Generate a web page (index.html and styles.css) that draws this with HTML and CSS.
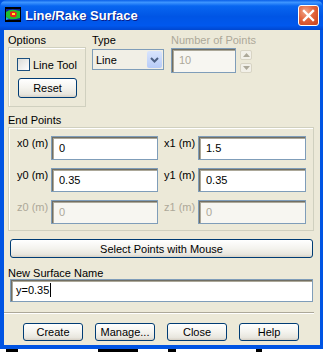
FILE: index.html
```html
<!DOCTYPE html>
<html lang="en">
<head>
  <title>Line/Rake Surface</title>
  <link rel="stylesheet" href="styles.css">
</head>
<body>
<div class="window">
  <div class="titlebar">
    <svg class="app-icon" width="16" height="15" viewBox="0 0 16 15">
      <rect x="0" y="0" width="16" height="15" fill="#000"/>
      <rect x="1" y="2" width="14" height="11" fill="#0d1f9c"/>
      <path d="M1 5 Q5 2 10 3 L15 4 L15 11 Q9 13 4 12 L1 10 Z" fill="#20c030"/>
      <path d="M5 5 Q9 3 12 6 L11 10 Q7 11 5 9 Z" fill="#e8241a"/>
      <path d="M7 6 L10 6 L10 8 L7 8 Z" fill="#fff21a"/>
      <path d="M1 10 L4 12 L1 13 Z" fill="#1ab0e8"/>
    </svg>
    <div class="title">Line/Rake Surface</div>
    <div class="close-btn">
      <svg width="13" height="13" viewBox="0 0 13 13">
        <path d="M2 2 L11 11 M11 2 L2 11" stroke="#fff" stroke-width="2.4" stroke-linecap="square"/>
      </svg>
    </div>
  </div>

  <div class="content">
    <div class="top-row">
      <div class="options-group">
        <div class="label">Options</div>
        <div class="group-box options-box">
          <div class="check-row">
            <span class="checkbox"></span>
            <span>Line Tool</span>
          </div>
          <div class="btn reset-btn">Reset</div>
        </div>
      </div>

      <div class="type-group">
        <div class="label">Type</div>
        <div class="select">
          <span class="select-value">Line</span>
          <span class="select-arrow">
            <svg width="9" height="6" viewBox="0 0 9 6">
              <path d="M1 1 L4.5 4.5 L8 1" stroke="#4d6185" stroke-width="2" fill="none"/>
            </svg>
          </span>
        </div>
      </div>

      <div class="points-group">
        <div class="label disabled">Number of Points</div>
        <div class="spin-row">
          <div class="field disabled-field points-field">10</div>
          <div class="spinner">
            <span class="spin-btn">
              <svg width="7" height="4" viewBox="0 0 7 4"><path d="M0 4 L3.5 0 L7 4 Z" fill="#aca899"/></svg>
            </span>
            <span class="spin-btn">
              <svg width="7" height="4" viewBox="0 0 7 4"><path d="M0 0 L3.5 4 L7 0 Z" fill="#aca899"/></svg>
            </span>
          </div>
        </div>
      </div>
    </div>

    <div class="label endpoints-label">End Points</div>
    <div class="group-box endpoints-box">
      <div class="point-row">
        <span class="coord-label">x0 (m)</span>
        <div class="field coord-field">0</div>
        <span class="coord-label right-label">x1 (m)</span>
        <div class="field coord-field wide">1.5</div>
      </div>
      <div class="point-row">
        <span class="coord-label">y0 (m)</span>
        <div class="field coord-field">0.35</div>
        <span class="coord-label right-label">y1 (m)</span>
        <div class="field coord-field wide">0.35</div>
      </div>
      <div class="point-row">
        <span class="coord-label disabled">z0 (m)</span>
        <div class="field coord-field disabled-field">0</div>
        <span class="coord-label right-label disabled">z1 (m)</span>
        <div class="field coord-field wide disabled-field">0</div>
      </div>
    </div>

    <div class="btn wide-btn">Select Points with Mouse</div>

    <div class="label name-label">New Surface Name</div>
    <div class="field name-field">y=0.35<span class="caret"></span></div>

    <div class="separator"></div>

    <div class="button-row">
      <div class="btn action-btn">Create</div>
      <div class="btn action-btn">Manage...</div>
      <div class="btn action-btn">Close</div>
      <div class="btn action-btn">Help</div>
    </div>
  </div>
</div>
<div class="behind">
  <span class="blob b1"></span>
  <span class="blob b2"></span>
  <span class="blob b3"></span>
  <span class="blob b4"></span>
</div>
</body>
</html>
```

FILE: styles.css
```css
body {
  margin: 0;
  width: 323px;
  height: 352px;
  overflow: hidden;
  background: #fff;
  font-family: 'Liberation Sans', Arial, sans-serif;
  font-size: 11px;
  color: #000;
}

.window {
  width: 323px;
  height: 349px;
  box-sizing: border-box;
  background: #0054e3;
  display: flex;
  flex-direction: column;
}

.titlebar {
  height: 30px;
  flex: none;
  display: flex;
  align-items: center;
  padding: 0 5px;
  background: linear-gradient(#0a5fe8 0%, #3d95ff 8%, #0866f0 20%, #0055e5 55%, #0058ee 85%, #0047d0 100%);
  border-radius: 7px 7px 0 0;
}

.app-icon {
  flex: none;
  margin-top: -1px;
}

.title {
  flex: 1;
  margin-left: 4px;
  color: #fff;
  font-weight: bold;
  font-size: 13px;
  text-shadow: 1px 1px 0 #0a1e8a;
}

.close-btn {
  width: 19px;
  height: 19px;
  border: 1px solid #fff;
  border-radius: 3px;
  background: radial-gradient(circle at 35% 30%, #f2a689 0%, #e2643c 45%, #c8401a 100%);
  display: flex;
  align-items: center;
  justify-content: center;
  margin-right: -1px;
}

.content {
  flex: 1;
  margin: 0 3px 4px 4px;
  background: #ece9d8;
  padding: 3px 0 0 4px;
}

.label {
  height: 14px;
  line-height: 14px;
}

.disabled {
  color: #aca899;
}

.top-row {
  display: flex;
}

.group-box {
  border: 1px solid #d0d0bf;
  box-shadow: inset 1px 1px 0 #fff;
  box-sizing: border-box;
}

.options-group {
  width: 78px;
}

.options-box {
  height: 60px;
  padding: 10px 0 0 8px;
}

.check-row {
  display: flex;
  align-items: center;
  gap: 3px;
  height: 13px;
}

.checkbox {
  width: 11px;
  height: 11px;
  border: 1px solid #1c5180;
  background: linear-gradient(135deg, #dcdcd7, #fff);
}

.btn {
  box-sizing: border-box;
  border: 1px solid #003c74;
  border-radius: 3px;
  background: linear-gradient(#fff 0%, #f4f3ee 50%, #e8e6de 85%, #d6d0c5 100%);
  display: flex;
  align-items: center;
  justify-content: center;
}

.reset-btn {
  width: 59px;
  height: 20px;
  margin: 7px 0 0 1px;
}

.type-group {
  width: 72px;
  margin-left: 6px;
}

.select {
  margin-top: 2px;
  height: 21px;
  box-sizing: border-box;
  border: 1px solid #7f9db9;
  background: #f1efe6;
  display: flex;
  align-items: center;
}

.select-value {
  flex: 1;
  padding-left: 3px;
}

.select-arrow {
  width: 15px;
  height: 17px;
  margin-right: 1px;
  border-radius: 2px;
  background: linear-gradient(#d9e5fd, #b7cbf8);
  display: flex;
  align-items: center;
  justify-content: center;
}

.points-group {
  margin-left: 7px;
}

.spin-row {
  display: flex;
  margin-top: 1px;
}

.field {
  box-sizing: border-box;
  border: 1px solid #7f9db9;
  box-shadow: inset 1px 1px 0 #716f64, inset 2px 2px 0 #aca899;
  background: #fff;
  padding: 5px 0 0 7px;
}

.disabled-field {
  background: #f7f6f1;
  color: #aca899;
}

.points-field {
  width: 65px;
  height: 25px;
}

.spinner {
  margin-left: 4px;
  margin-top: 2px;
  display: flex;
  flex-direction: column;
  gap: 3px;
}

.spin-btn {
  width: 10px;
  height: 8px;
  border: 1px solid #d8d4c4;
  border-radius: 2px;
  background: #f2f0e8;
  display: flex;
  align-items: center;
  justify-content: center;
}

.endpoints-label {
  margin-top: 6px;
}

.endpoints-box {
  width: 306px;
  padding: 8px 0 6px 8px;
}

.point-row {
  display: flex;
  align-items: flex-start;
  margin-bottom: 8px;
}

.point-row:last-child {
  margin-bottom: 0;
}

.coord-label {
  width: 34px;
  padding-top: 1px;
}

.right-label {
  margin-left: 6px;
}

.coord-field {
  width: 107px;
  height: 24px;
}

.coord-field.wide {
  width: 108px;
}

.wide-btn {
  width: 303px;
  height: 19px;
  margin: 8px 0 0 2px;
}

.name-label {
  margin-top: 8px;
  height: 13px;
}

.name-field {
  width: 303px;
  height: 23px;
  margin-left: 2px;
  padding: 4px 0 0 5px;
  display: flex;
  align-items: flex-start;
}

.caret {
  width: 1px;
  height: 14px;
  background: #000;
  margin-left: 1px;
  margin-top: -1px;
}

.separator {
  margin: 10px 0 0 -4px;
  width: 310px;
  height: 1px;
  background: #aca899;
  border-bottom: 1px solid #fff;
}

.button-row {
  display: flex;
  gap: 12px;
  margin: 9px 0 0 15px;
}

.action-btn {
  width: 60px;
  height: 18px;
}

.behind {
  height: 3px;
  background: #fff;
  display: flex;
}

.blob {
  height: 3px;
  background: #000;
}

.b1 { width: 12px; margin-left: 6px; }
.b2 { width: 40px; margin-left: 80px; }
.b3 { width: 8px; margin-left: 30px; }
.b4 { width: 6px; margin-left: 80px; }
```
